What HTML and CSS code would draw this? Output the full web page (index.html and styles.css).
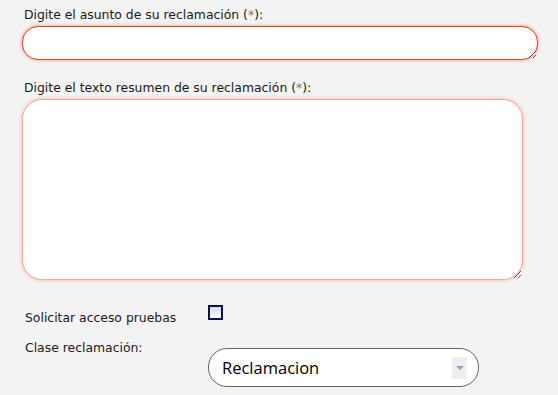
FILE: index.html
```html
<!DOCTYPE html>
<html lang="es">
<head>
<meta charset="utf-8">
<link rel="stylesheet" href="styles.css">
</head>
<body>
<form class="form">
  <label class="lbl">Digite el asunto de su reclamación (<span class="req">*</span>):</label>
  <textarea class="field field-subject"></textarea>
  <label class="lbl lbl-second">Digite el texto resumen de su reclamación (<span class="req">*</span>):</label>
  <textarea class="field field-summary"></textarea>
  <div class="row row-check">
    <span class="row-label">Solicitar acceso pruebas</span>
    <span class="check"></span>
  </div>
  <div class="row row-select">
    <span class="row-label">Clase reclamación:</span>
    <div class="select">
      <span class="select-text">Reclamacion</span>
      <span class="select-btn"><span class="tri"></span></span>
    </div>
  </div>
</form>
</body>
</html>
```
FILE: styles.css
```css
html, body {
  margin: 0;
  padding: 0;
  background: #f3f3f3;
}
body {
  font-family: "DejaVu Sans", "Liberation Sans", sans-serif;
  color: #1a1a1a;
}
.form {
  padding: 7px 0 0 22px;
  display: flex;
  flex-direction: column;
  align-items: flex-start;
}
.lbl {
  display: block;
  font-size: 12.4px;
  line-height: 16px;
  margin-left: 2px;
  margin-bottom: 3px;
}
.req {
  color: #777;
}
.lbl-second {
  margin-top: 20px;
}
.field {
  display: block;
  box-sizing: border-box;
  margin: 0;
  background: #fff;
  font: inherit;
  outline: none;
}
.field-subject {
  width: 516px;
  height: 34px;
  border: 1px solid #d8462c;
  border-radius: 16px;
  box-shadow: 0 0 3px 1px rgba(236, 120, 100, 0.45);
}
.field-summary {
  width: 501px;
  height: 181px;
  border: 1px solid #f0a89c;
  border-radius: 20px;
  box-shadow: 0 0 3px 1px rgba(240, 150, 135, 0.4);
}
.row {
  display: flex;
  align-items: flex-start;
  font-size: 12.4px;
  line-height: 16px;
}
.row-label {
  width: 183px;
  padding-left: 3px;
}
.row-check {
  margin-top: 25px;
}
.row-check .row-label {
  padding-top: 5px;
}
.row-select .row-label {
  padding-top: 2px;
}
.check {
  box-sizing: border-box;
  width: 15px;
  height: 15px;
  border: 2px solid #0f0f4f;
  background: linear-gradient(#cfe3ef, #f6f9fb);
}
.row-select {
  margin-top: 12px;
}
.select {
  margin-top: 10px;
  box-sizing: border-box;
  width: 271px;
  height: 39px;
  border: 1px solid #666;
  border-radius: 19px;
  background: #fff;
  display: flex;
  align-items: center;
  padding: 0 11px 0 13px;
}
.select-text {
  flex: 1;
  font-family: "Open Sans", sans-serif;
  font-size: 16.5px;
  color: #000;
}
.select-btn {
  width: 15px;
  height: 22px;
  background: #eeeeef;
  display: flex;
  align-items: center;
  justify-content: center;
}
.tri {
  width: 0;
  height: 0;
  border-left: 4px solid transparent;
  border-right: 4px solid transparent;
  border-top: 4px solid #90a4c4;
}
```
